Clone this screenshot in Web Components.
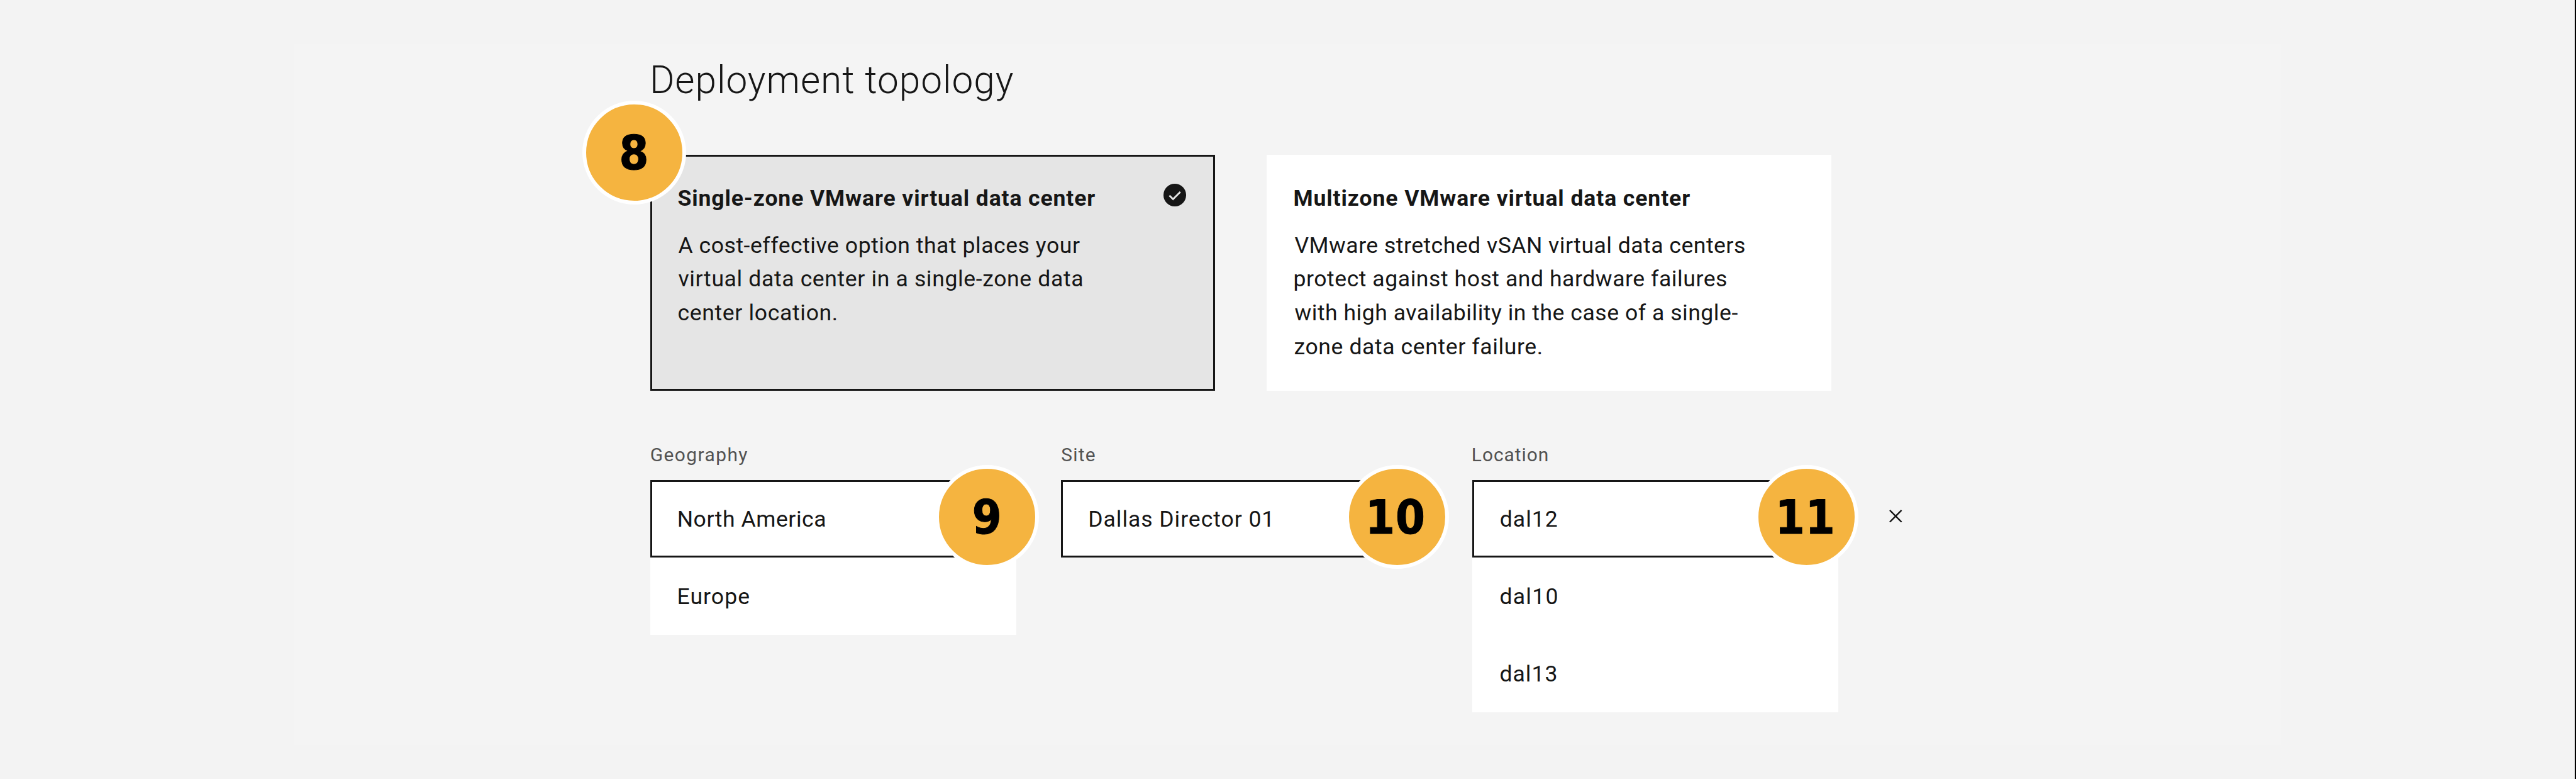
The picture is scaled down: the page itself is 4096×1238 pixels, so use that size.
<!DOCTYPE html>
<html lang="en">
<head>
<meta charset="utf-8">
<title>Deployment topology</title>
<style>
  /* 1rem = 10 design units */
  html { font-size: 9.142857px; background: #f2f2f2; }
  body { margin: 0; width: 4096px; height: 1238px; overflow: hidden; font-family: Roboto, "Liberation Sans", sans-serif; color: #161616; }
</style>
</head>
<body>
<deployment-page></deployment-page>
<script>
const RU = 9.142857 / 10;
const ctx = document.createElement('canvas').getContext('2d');

class Base extends HTMLElement {
  render(html) {
    if (!this.shadowRoot) this.attachShadow({ mode: 'open' });
    this.shadowRoot.innerHTML = html;
  }
}

/* One line of text, tracked so its ink spans the width given in `w` */
class FitText extends Base {
  connectedCallback() {
    const w = parseFloat(this.getAttribute('w')) * RU;
    this.render(`<style>:host{display:block;white-space:pre;font-variant-ligatures:none}span{display:inline-block}</style><span><slot></slot></span>`);
    const span = this.shadowRoot.querySelector('span');
    const text = this.textContent;
    const cs = getComputedStyle(this);
    ctx.font = `${cs.fontWeight} ${cs.fontSize} ${cs.fontFamily}`;
    const m = ctx.measureText(text);
    const left = -m.actualBoundingBoxLeft;
    const right = m.width - m.actualBoundingBoxRight;
    const ink = span.getBoundingClientRect().width - left - right;
    this.style.width = w + 'px';
    if (text.length > 1) {
      span.style.letterSpacing = (w - ink) / (text.length - 1) + 'px';
      span.style.marginLeft = -left + 'px';
    } else {
      span.style.marginLeft = (w - ink) / 2 - left + 'px';
    }
  }
}

class StepBadge extends Base {
  connectedCallback() {
    this.render(`<style>
      :host{position:absolute;left:calc(var(--cx) - 9.03rem);top:calc(var(--cy) - 9.03rem);box-sizing:border-box;width:18.06rem;height:18.06rem;border:6.4px solid #fff;border-radius:50%;background:#f5b440;display:flex;align-items:center;justify-content:center;padding:.1rem .2rem 0 0;font:700 8.2rem/9rem "DejaVu Sans Condensed","DejaVu Sans",sans-serif;color:#000;-webkit-text-stroke:1px #000;z-index:2}
    </style><fit-text w="${this.getAttribute('w')}">${this.getAttribute('n')}</fit-text>`);
  }
}

class CheckIcon extends Base {
  connectedCallback() {
    this.render(`<style>:host{display:block;width:3.94rem;height:3.94rem}svg{display:block;width:100%;height:100%}</style>
    <svg viewBox="0 0 39 39"><circle cx="19.5" cy="19.5" r="19.5" fill="#161616"/><path d="M10.2 20.2l6.3 6.3L29 14" fill="none" stroke="#e5e5e5" stroke-width="3"/></svg>`);
  }
}

class CloseIcon extends Base {
  connectedCallback() {
    this.render(`<style>:host{display:block;width:2.24rem;height:2.24rem}svg{display:block;width:100%;height:100%}</style>
    <svg viewBox="0 0 22.4 22.4"><path d="M1 1l20.4 20.4M21.4 1L1 21.4" fill="none" stroke="#161616" stroke-width="2.6"/></svg>`);
  }
}

class TopologyCard extends Base {
  connectedCallback() {
    this.render(`<style>
      :host{display:flex;justify-content:space-between;position:relative;box-sizing:border-box;width:98.25rem;height:41rem;padding:4.76rem 4.96rem 0 4.87rem;background:#fff;font-size:3.89rem;line-height:5.86rem}
      :host([selected]){background:#e5e5e5;border:3px solid #161616;padding:4.43rem 4.7rem 0 4.57rem}
      .copy{display:flex;flex-direction:column;gap:2.27rem}
      .title{font-weight:700}
      check-icon{margin-top:.23rem}
    </style>
    <div class="copy"><div class="title"><slot name="title"></slot></div><div><slot></slot></div></div>
    ${this.hasAttribute('selected') ? '<check-icon></check-icon>' : ''}
    <slot name="badge"></slot>`);
  }
}

class SelectField extends Base {
  connectedCallback() {
    this.render(`<style>
      :host{display:flex;flex-direction:column;gap:2.2rem;width:63.65rem}
      .label{font-size:3.27rem;line-height:4.4rem;color:#525252;padding-left:.12rem}
      .list{position:relative;background:#fff;font-size:3.89rem;line-height:13.43rem}
      .current,.options ::slotted(*){box-sizing:border-box;height:13.43rem;display:block}
      .current{border:3px solid #161616;line-height:13.1rem;padding-left:4.6rem}
      .options{padding-left:4.89rem;line-height:13.75rem}
    </style>
    <div class="label"><slot name="label"></slot></div>
    <div class="list"><div class="current"><slot name="current"></slot></div><div class="options"><slot></slot></div><slot name="badge"></slot></div>`);
  }
}

class DeploymentPage extends Base {
  connectedCallback() {
    this.render(`<style>
      :host{display:flex;justify-content:space-between;box-sizing:border-box;height:1238px;padding-left:51.05rem;background:#f3f3f3}
      .panel{box-sizing:border-box;width:345.6rem;height:121.85rem;margin-top:7.65rem;background:#f4f4f4;padding:2.34rem 0 0 62.01rem}
      .edge{width:2px;background:#000}
      h1{margin:0;padding-left:.46rem;font-weight:300;font-size:6.6rem;line-height:8rem}
      .cards{display:flex;gap:8.97rem;margin-top:8.91rem}
      .fields{display:flex;gap:7.83rem;margin-top:9rem;align-items:flex-start}
      close-icon{margin:11.68rem 0 0 1.11rem}
    </style>
    <main class="panel">
      <h1><fit-text w="626.5">Deployment topology</fit-text></h1>
      <div class="cards">
        <topology-card selected>
          <fit-text slot="title" w="725">Single-zone VMware virtual data center</fit-text>
          <fit-text w="698.3">A cost-effective option that places your</fit-text>
          <fit-text w="703">virtual data center in a single-zone data</fit-text>
          <fit-text w="275">center location.</fit-text>
          <step-badge slot="badge" n="8" w="45" style="--cx:-3.04rem;--cy:-.72rem"></step-badge>
        </topology-card>
        <topology-card>
          <fit-text slot="title" w="687.7">Multizone VMware virtual data center</fit-text>
          <fit-text w="782.5">VMware stretched vSAN virtual data centers</fit-text>
          <fit-text w="751">protect against host and hardware failures</fit-text>
          <fit-text w="771">with high availability in the case of a single-</fit-text>
          <fit-text w="429">zone data center failure.</fit-text>
        </topology-card>
      </div>
      <div class="fields">
        <select-field>
          <fit-text slot="label" w="168">Geography</fit-text>
          <fit-text slot="current" w="255.4">North America</fit-text>
          <fit-text w="123.5">Europe</fit-text>
          <step-badge slot="badge" n="9" w="45" style="--cx:58.62rem;--cy:6.4rem"></step-badge>
        </select-field>
        <select-field>
          <fit-text slot="label" w="57.5">Site</fit-text>
          <fit-text slot="current" w="314">Dallas Director 01</fit-text>
          <step-badge slot="badge" n="10" w="93" style="--cx:58.43rem;--cy:6.4rem"></step-badge>
        </select-field>
        <select-field>
          <fit-text slot="label" w="130.2">Location</fit-text>
          <fit-text slot="current" w="98.5">dal12</fit-text>
          <fit-text w="98.5">dal10</fit-text>
          <fit-text w="97.5">dal13</fit-text>
          <step-badge slot="badge" n="11" w="92" style="--cx:58.19rem;--cy:6.4rem"></step-badge>
        </select-field>
        <close-icon></close-icon>
      </div>
    </main>
    <div class="edge"></div>`);
  }
}

customElements.define('deployment-page', DeploymentPage);
customElements.define('topology-card', TopologyCard);
customElements.define('select-field', SelectField);
customElements.define('step-badge', StepBadge);
customElements.define('check-icon', CheckIcon);
customElements.define('close-icon', CloseIcon);
customElements.define('fit-text', FitText);
</script>
</body>
</html>
